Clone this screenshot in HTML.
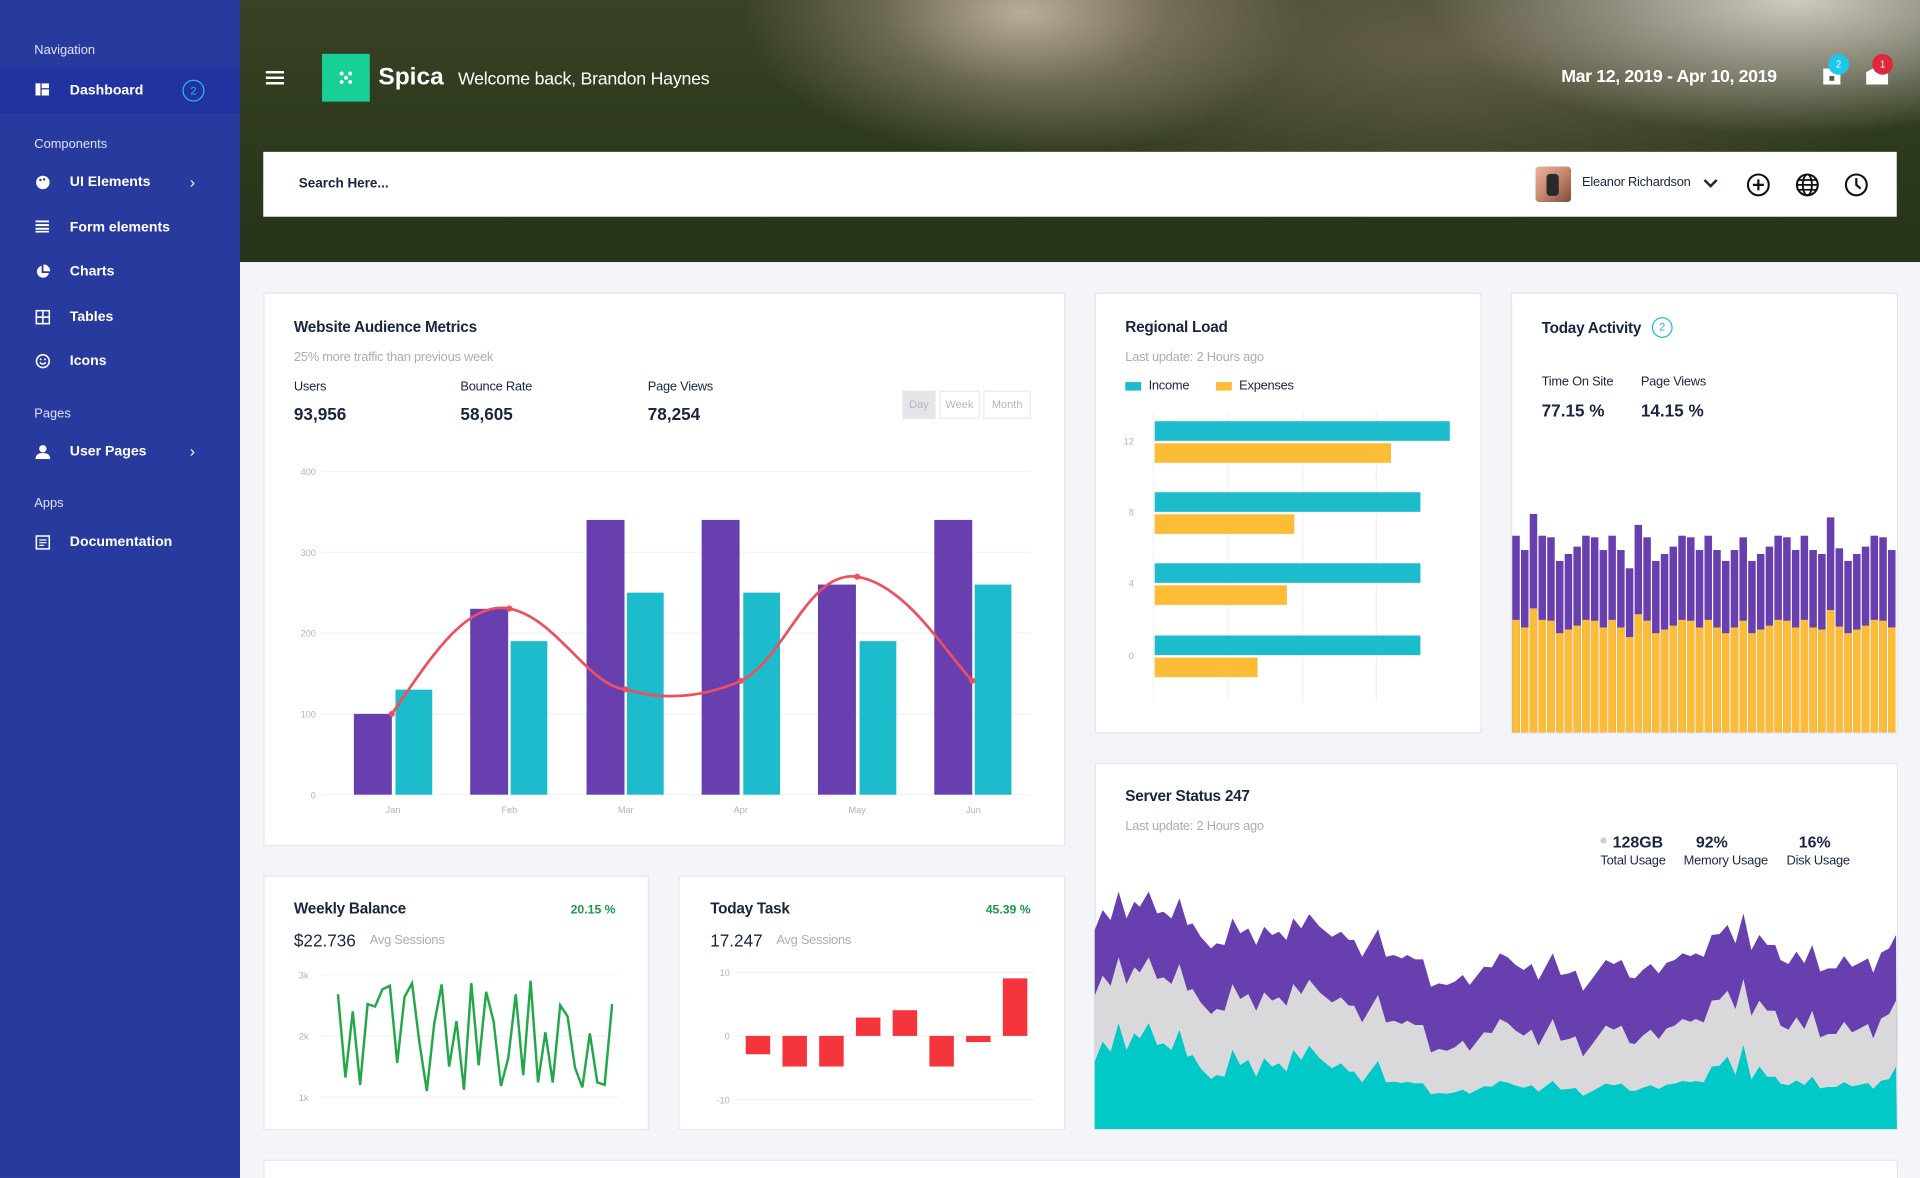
<!DOCTYPE html>
<html><head><meta charset="utf-8"><style>
*{margin:0;padding:0;box-sizing:border-box}
html,body{width:1920px;height:1178px;overflow:hidden;background:#f3f5f9}
#w{position:absolute;left:0;top:0;width:1568px;height:962px;overflow:hidden;transform:scale(1.22449);transform-origin:0 0;font-family:"Liberation Sans",sans-serif;color:#1a2540;background:#f3f5f9}
.sb{position:absolute;left:0;top:0;width:196px;height:962px;background:#283a9e;color:#fff}
.sec{position:absolute;left:28px;font-size:10.5px;color:#dfe4ff}
.it{position:absolute;left:0;width:196px;height:38px;font-size:11.5px;font-weight:bold;line-height:38px;padding-left:57px}
.it svg{position:absolute;left:29px;top:13px}
.chev{position:absolute;left:155px;top:0;font-weight:normal;font-size:13px}
.hd{position:absolute;left:196px;top:0;width:1372px;height:214px;overflow:hidden;
background:
radial-gradient(ellipse 230px 120px at 640px 10px,rgba(200,185,165,.9),rgba(160,145,125,.5) 50%,rgba(0,0,0,0) 100%),
radial-gradient(ellipse 300px 110px at 1270px 0px,rgba(215,210,200,.95),rgba(180,175,165,.5) 60%,rgba(0,0,0,0) 100%),
radial-gradient(ellipse 420px 140px at 980px 40px,rgba(110,100,80,.8),rgba(0,0,0,0) 100%),
linear-gradient(180deg,#3a4226 0%,#2e3a1c 50%,#27331a 100%)}
.card{position:absolute;background:#fff;border:1px solid #e3e6ee}
.t{position:absolute;font-size:12.5px;font-weight:bold;color:#1a2540;letter-spacing:-.2px}
.s{position:absolute;font-size:10.5px;color:#a9adb5;letter-spacing:-.2px}
.l{position:absolute;font-size:10.5px;color:#1a2540;letter-spacing:-.2px}
.n{position:absolute;font-size:14px;font-weight:bold;color:#1a2540}
</style></head><body><div id="w">
<div class="sb">
<div class="sec" style="top:35px">Navigation</div>
<div class="it" style="top:55px;background:#2233a0">Dashboard<svg width="11" height="10"><rect x="0" y="0" width="4" height="10" fill="#fff"/><rect x="5" y="0" width="6" height="4" fill="#fff"/><rect x="5" y="5" width="6" height="5" fill="#fff"/></svg><span style="position:absolute;left:149px;top:10px;width:18px;height:18px;border:1px solid #29b6f6;border-radius:50%;font-size:9px;font-weight:normal;line-height:16px;text-align:center;color:#29b6f6">2</span></div>
<div class="sec" style="top:112px">Components</div>
<div class="it" style="top:130px">UI Elements<svg width="12" height="12"><circle cx="6" cy="6" r="5.5" fill="#fff"/><circle cx="4" cy="4" r="1" fill="#283a9e"/><circle cx="7" cy="3.5" r="1" fill="#283a9e"/></svg><span class="chev">›</span></div>
<div class="it" style="top:167px">Form elements<svg width="11" height="10"><rect y="0" width="11" height="1.6" fill="#fff"/><rect y="3" width="11" height="1.6" fill="#fff"/><rect y="6" width="11" height="1.6" fill="#fff"/><rect y="8.5" width="11" height="1.5" fill="#fff"/></svg></div>
<div class="it" style="top:203px">Charts<svg width="12" height="12"><path d="M5 1A5 5 0 1 0 11 7H5Z" fill="#fff"/><path d="M6.5 0V5.5H12A5.5 5.5 0 0 0 6.5 0Z" fill="#fff"/></svg></div>
<div class="it" style="top:240px">Tables<svg width="12" height="12"><rect x=".7" y=".7" width="10.6" height="10.6" fill="none" stroke="#fff" stroke-width="1.3"/><path d="M6 0V12M0 6H12" stroke="#fff" stroke-width="1.3"/></svg></div>
<div class="it" style="top:276px">Icons<svg width="12" height="12"><circle cx="6" cy="6" r="5.2" fill="none" stroke="#fff" stroke-width="1.3"/><path d="M3.5 7Q6 9.5 8.5 7" fill="none" stroke="#fff" stroke-width="1.2"/><circle cx="4.2" cy="4.5" r=".8" fill="#fff"/><circle cx="7.8" cy="4.5" r=".8" fill="#fff"/></svg></div>
<div class="sec" style="top:332px">Pages</div>
<div class="it" style="top:350px">User Pages<svg width="12" height="12"><circle cx="6" cy="3.5" r="3" fill="#fff"/><path d="M0 12Q0 7 6 7Q12 7 12 12Z" fill="#fff"/></svg><span class="chev">›</span></div>
<div class="sec" style="top:405px">Apps</div>
<div class="it" style="top:424px">Documentation<svg width="12" height="12"><rect x=".7" y=".7" width="10.6" height="10.6" fill="none" stroke="#fff" stroke-width="1.3"/><path d="M3 4H9M3 6.2H9M3 8.4H7" stroke="#fff" stroke-width="1"/></svg></div>
</div>
<div class="hd">
<svg style="position:absolute;left:21px;top:58px" width="15" height="11"><rect width="15" height="2" fill="#fff"/><rect y="4.5" width="15" height="2" fill="#fff"/><rect y="9" width="15" height="2" fill="#fff"/></svg>
<div style="position:absolute;left:67px;top:44px;width:39px;height:39px;background:#17cf97"><svg width="39" height="39"><g fill="#fff"><circle cx="16" cy="16" r="1.6"/><circle cx="23" cy="16" r="1.6"/><circle cx="19.5" cy="19.5" r="1.6"/><circle cx="16" cy="23" r="1.6"/><circle cx="23" cy="23" r="1.6"/></g></svg></div>
<div style="position:absolute;left:113px;top:52px;font-size:20px;font-weight:bold;color:#fff">Spica</div>
<div style="position:absolute;left:178px;top:57px;font-size:14.5px;color:#fff;letter-spacing:-.2px">Welcome back, Brandon Haynes</div>
<div style="position:absolute;left:1079px;top:55px;font-size:14.5px;color:#fff;font-weight:bold;letter-spacing:-.3px">Mar 12, 2019 - Apr 10, 2019</div>
<svg style="position:absolute;left:1292px;top:52px" width="16" height="18"><rect x="1" y="4" width="14" height="13" fill="#fff"/><rect x="6" y="10" width="4" height="4" fill="#555"/></svg>
<div style="position:absolute;left:1297px;top:44px;width:17px;height:17px;border-radius:50%;background:#1ec6ea;color:#fff;font-size:8px;text-align:center;line-height:17px">2</div>
<svg style="position:absolute;left:1328px;top:54px" width="18" height="15"><path d="M0 5L9 0L18 5V15H0Z" fill="#fff"/></svg>
<div style="position:absolute;left:1333px;top:44px;width:17px;height:17px;border-radius:50%;background:#e0283d;color:#fff;font-size:8px;text-align:center;line-height:17px">1</div>
<div style="position:absolute;left:19px;top:124px;width:1334px;height:53px;background:#fff">
<div style="position:absolute;left:29px;top:20px;font-size:11px;font-weight:bold;color:#1a2540">Search Here...</div>
<div style="position:absolute;left:1039px;top:12px;width:29px;height:29px;border-radius:3px;background:linear-gradient(135deg,#e8b49a,#c6866a 50%,#7a4e3e)"><div style="position:absolute;left:9px;top:6px;width:10px;height:18px;background:#2a2a2a;border-radius:3px"></div></div>
<div style="position:absolute;left:1077px;top:19px;font-size:10.5px;color:#1a2540;letter-spacing:-.2px">Eleanor Richardson</div>
<svg style="position:absolute;left:1176px;top:22px" width="12" height="8"><path d="M1 1L6 6L11 1" fill="none" stroke="#1a2540" stroke-width="2"/></svg>
<svg style="position:absolute;left:1211px;top:17px" width="20" height="20"><circle cx="10" cy="10" r="8.5" fill="none" stroke="#111" stroke-width="1.7"/><path d="M10 5.5V14.5M5.5 10H14.5" stroke="#111" stroke-width="1.8"/></svg>
<svg style="position:absolute;left:1251px;top:17px" width="20" height="20"><circle cx="10" cy="10" r="8.5" fill="none" stroke="#111" stroke-width="1.7"/><ellipse cx="10" cy="10" rx="3.7" ry="8.5" fill="none" stroke="#111" stroke-width="1.5"/><path d="M1.5 10H18.5M3 6H17M3 14H17" stroke="#111" stroke-width="1.4"/></svg>
<svg style="position:absolute;left:1291px;top:17px" width="20" height="20"><circle cx="10" cy="10" r="8.5" fill="none" stroke="#111" stroke-width="1.7"/><path d="M10 4.5V10L13.5 13" fill="none" stroke="#111" stroke-width="1.8"/></svg>
</div>
</div>

<div class="card" style="left:215px;top:239px;width:655px;height:452px"></div>
<div class="card" style="left:894px;top:239px;width:316px;height:360px"></div>
<div class="card" style="left:1234px;top:239px;width:316px;height:360px"></div>
<div class="card" style="left:894px;top:623px;width:656px;height:300px"></div>
<div class="card" style="left:215px;top:715px;width:315px;height:208px"></div>
<div class="card" style="left:554px;top:715px;width:316px;height:208px"></div>
<div class="card" style="left:215px;top:947px;width:1335px;height:20px"></div>

<div class="t" style="left:240px;top:260px">Website Audience Metrics</div>
<div class="s" style="left:240px;top:286px">25% more traffic than previous week</div>
<div class="l" style="left:240px;top:310px">Users</div><div class="n" style="left:240px;top:330px">93,956</div>
<div class="l" style="left:376px;top:310px">Bounce Rate</div><div class="n" style="left:376px;top:330px">58,605</div>
<div class="l" style="left:529px;top:310px">Page Views</div><div class="n" style="left:529px;top:330px">78,254</div>
<div style="position:absolute;left:737px;top:319px;width:27px;height:23px;background:#e5e6e9;border:1px solid #e5e6e9;font-size:9px;color:#b3b6bc;text-align:center;line-height:21px">Day</div>
<div style="position:absolute;left:767px;top:319px;width:33px;height:23px;border:1px solid #e9eaee;font-size:9px;color:#b3b6bc;text-align:center;line-height:21px">Week</div>
<div style="position:absolute;left:803px;top:319px;width:39px;height:23px;border:1px solid #e9eaee;font-size:9px;color:#b3b6bc;text-align:center;line-height:21px">Month</div>

<div class="t" style="left:919px;top:260px">Regional Load</div>
<div class="s" style="left:919px;top:286px">Last update: 2 Hours ago</div>
<div style="position:absolute;left:919px;top:312px;width:13px;height:7px;background:#1cbccc"></div><div class="l" style="left:938px;top:309px">Income</div>
<div style="position:absolute;left:993px;top:312px;width:13px;height:7px;background:#fdbc36"></div><div class="l" style="left:1012px;top:309px">Expenses</div>

<div class="t" style="left:1259px;top:261px">Today Activity</div>
<div style="position:absolute;left:1349px;top:259px;width:17px;height:17px;border:1px solid #1cbccc;border-radius:50%;font-size:9px;color:#1cbccc;text-align:center;line-height:15px">2</div>
<div class="l" style="left:1259px;top:306px">Time On Site</div><div class="n" style="left:1259px;top:327px">77.15 %</div>
<div class="l" style="left:1340px;top:306px">Page Views</div><div class="n" style="left:1340px;top:327px">14.15 %</div>

<div class="t" style="left:919px;top:643px">Server Status 247</div>
<div class="s" style="left:919px;top:669px">Last update: 2 Hours ago</div>
<div style="position:absolute;left:1307px;top:684px;width:5px;height:5px;border-radius:50%;background:#ccc"></div>
<div class="n" style="left:1317px;top:680px;font-size:13px">128GB</div><div class="l" style="left:1307px;top:697px">Total Usage</div>
<div class="n" style="left:1385px;top:680px;font-size:13px">92%</div><div class="l" style="left:1375px;top:697px">Memory Usage</div>
<div class="n" style="left:1469px;top:680px;font-size:13px">16%</div><div class="l" style="left:1459px;top:697px">Disk Usage</div>

<div class="t" style="left:240px;top:735px">Weekly Balance</div>
<div style="position:absolute;left:466px;top:738px;font-size:10px;color:#1a9a4a;font-weight:bold">20.15 %</div>
<div class="n" style="left:240px;top:760px;font-weight:normal">$22.736</div><div class="s" style="left:302px;top:762px">Avg Sessions</div>
<div class="t" style="left:580px;top:735px">Today Task</div>
<div style="position:absolute;left:805px;top:738px;font-size:10px;color:#1a9a4a;font-weight:bold">45.39 %</div>
<div class="n" style="left:580px;top:760px;font-weight:normal">17.247</div><div class="s" style="left:634px;top:762px">Avg Sessions</div>

<svg id="g" style="position:absolute;left:0;top:0" width="1568" height="962" font-family="Liberation Sans,sans-serif"></svg>
</div>
<script>
var S='',g=document.getElementById('g');
function r(x,y,w,h,c){S+='<rect x="'+x+'" y="'+y+'" width="'+w+'" height="'+h+'" fill="'+c+'"/>';}
function tx(x,y,t,a){S+='<text x="'+x+'" y="'+y+'" font-size="7.5" fill="#b0b3b8" text-anchor="'+(a||'middle')+'">'+t+'</text>';}
[400,300,200,100,0].forEach(function(v,i){var y=385+i*66;S+='<line x1="262" x2="842" y1="'+y+'" y2="'+y+'" stroke="#f1f2f5"/>';tx(258,y+3,v,'end');});
var P='#673fae',T='#1cbccc',O='#fdbc36';
var bars=[[289,100,323,130],[384,230,417,190],[479,340,512,250],[573,340,607,250],[668,260,702,190],[763,340,796,260]];
var mo=['Jan','Feb','Mar','Apr','May','Jun'];
bars.forEach(function(b,i){r(b[0],649-b[1]*0.66,31,b[1]*0.66,P);r(b[2],649-b[3]*0.66,30,b[3]*0.66,T);tx(b[0]+32,664,mo[i]);});
S+='<path d="M320 583C350 540 380 490 416 497C455 505 480 560 511 563C550 575 585 565 605 556C640 540 660 465 700 471C740 478 770 530 794 556" fill="none" stroke="#ef4f5c" stroke-width="2.2"/>';
[[320,583],[416,497],[511,563],[605,556],[700,471],[794,556]].forEach(function(p){S+='<circle cx="'+p[0]+'" cy="'+p[1]+'" r="2.5" fill="#ef4f5c"/>';});
[942,1003,1064,1124].forEach(function(x){S+='<line x1="'+x+'" x2="'+x+'" y1="336" y2="573" stroke="#f1f2f5"/>';});
[[344,241,193,'12'],[402,217,114,'8'],[460,217,108,'4'],[519,217,84,'0']].forEach(function(a){r(943,a[0],a[1],16,T);r(943,a[0]+18,a[2],16,O);tx(926,a[0]+19,a[3],'end');});
var pt=[737,780,672,737,742,813,792,770,737,742,780,737,780,835,705,742,813,792,770,737,742,780,737,780,813,780,742,813,792,770,737,742,780,737,780,792,682,775,813,792,770,737,742,780];
var bw=314/44;
pt.forEach(function(z,i){var x=1235+i*bw;var yp=(z/3+290)/1.2245;var yo=((955+(z-672)*0.53)/3+290)/1.2245;r(x.toFixed(2),yp.toFixed(1),(bw-1).toFixed(2),(598-yp).toFixed(1),P);r(x.toFixed(2),yo.toFixed(1),(bw-1).toFixed(2),(598-yo).toFixed(1),O);});
var sp=[[10,510],[25,450],[40,480],[55,395],[70,475],[85,425],[95,440],[112,395],[128,460],[140,455],[155,475],[170,415],[185,495],[195,490],[210,530],[230,565],[240,550],[255,555],[270,475],[285,520],[300,505],[315,555],[330,500],[345,525],[358,515],[372,540],[385,475],[400,505],[415,462],[435,500],[458,530],[475,515],[490,540],[500,540],[515,590],[545,508],[560,590],[575,585],[590,595],[600,585],[615,598],[630,598],[645,680],[660,670],[675,675],[690,665],[705,645],[718,675],[745,620],[760,622],[775,580],[790,592],[805,615],[820,630],[835,612],[848,660],[875,580],[890,645],[905,640],[918,632],[932,692],[950,655],[975,600],[990,612],[1005,600],[1020,652],[1030,655],[1045,630],[1060,612],[1075,640],[1090,608],[1105,600],[1120,580],[1135,588],[1145,580],[1160,590],[1175,525],[1190,522],[1205,495],[1220,550],[1235,460],[1250,570],[1265,525],[1280,555],[1295,555],[1305,600],[1320,612],[1335,575],[1350,610],[1365,555],[1380,635],[1395,625],[1410,625],[1425,588],[1440,620],[1455,608],[1470,595],[1480,638],[1495,578],[1510,565],[1523,525]];
function area(off,c,teal){var d='M894 922';sp.forEach(function(p){var x=894+(p[0]-10)*0.4325;var zy=p[1]+off;if(teal)zy-=Math.max(0,p[1]-560)*0.6;var y=zy*0.2722+620.7;d+='L'+x.toFixed(1)+' '+y.toFixed(1);});d+='L1549 922Z';S+='<path d="'+d+'" fill="'+c+'"/>';}
area(0,P,0);area(197,'#d9d9db',0);area(395,'#00c9c8',1);
[[796,'3k'],[846,'2k'],[896,'1k']].forEach(function(a){S+='<line x1="262" x2="505" y1="'+a[0]+'" y2="'+a[0]+'" stroke="#f1f2f5"/>';tx(252,a[0]+3,a[1],'end');});
var wv=[812,880,826,886,820,822,808,805,868,814,803,852,891,836,804,871,834,890,803,870,810,834,887,864,812,878,801,884,843,884,821,830,872,888,844,884,886,820];
var d='';wv.forEach(function(y,i){d+=(i?'L':'M')+(276+i*6.05).toFixed(1)+' '+y;});
S+='<path d="'+d+'" fill="none" stroke="#22a84a" stroke-width="2"/>';
[[794,'10'],[846,'0'],[898,'-10']].forEach(function(a){S+='<line x1="600" x2="845" y1="'+a[0]+'" y2="'+a[0]+'" stroke="#f1f2f5"/>';tx(596,a[0]+3,a[1],'end');});
[[609,846,861],[639,846,871],[669,846,871],[699,831,846],[729,825,846],[759,846,871],[789,846,851],[819,799,846]].forEach(function(b){r(b[0],b[1],20,b[2]-b[1],'#f4363c');});
g.innerHTML=S;
</script>
</body></html>
